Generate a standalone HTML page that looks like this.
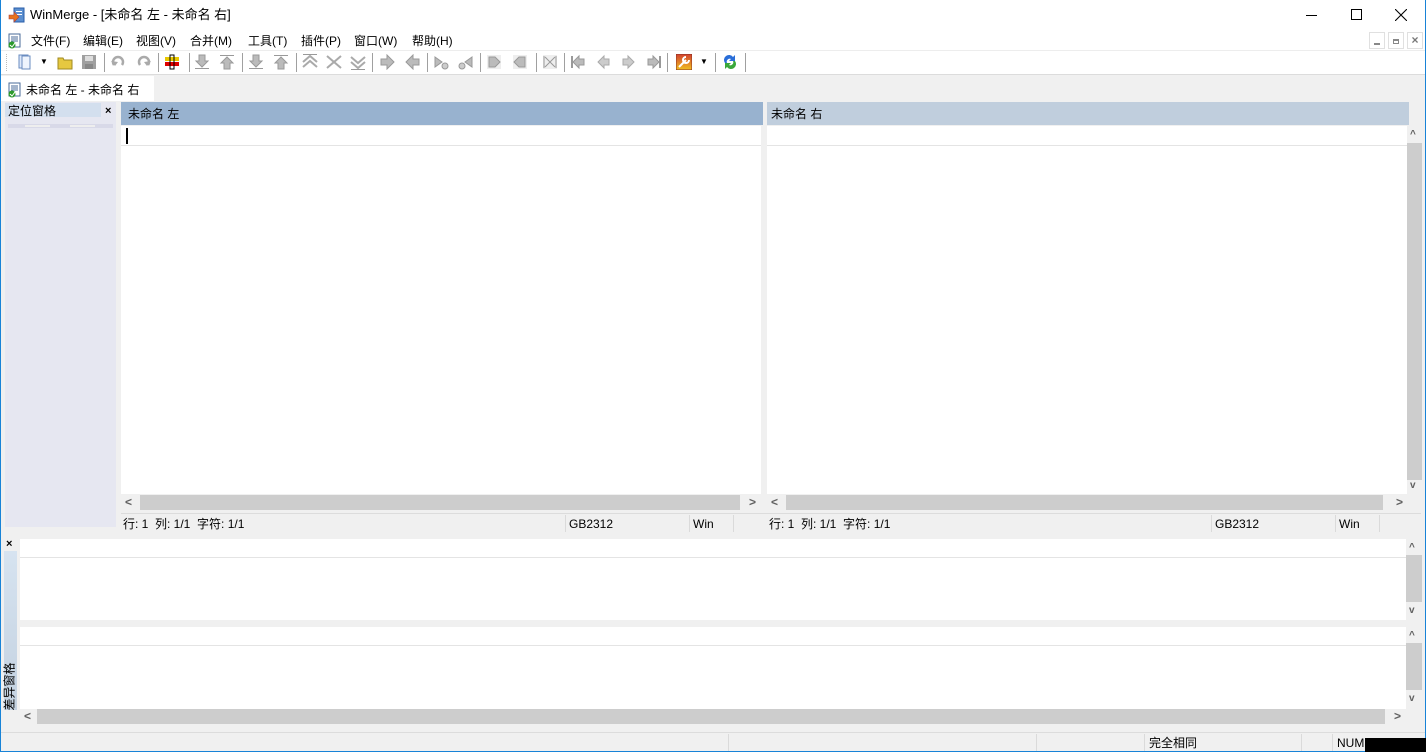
<!DOCTYPE html>
<html><head><meta charset="utf-8"><style>
*{margin:0;padding:0;box-sizing:border-box}
body{width:1426px;height:752px;position:relative;overflow:hidden;background:#f0f0f0;font-family:"Liberation Sans","Noto Sans CJK SC",sans-serif;font-size:12px;color:#000}
.a{position:absolute}
.t{position:absolute;white-space:nowrap;font-size:12px;line-height:14px}
.sep{position:absolute;top:53px;width:1px;height:19px;background:#a0a0a0}
.ic{position:absolute;top:54px;width:16px;height:16px}
</style></head><body>
<div class="a" style="left:0;top:0;width:1426px;height:752px;border:1px solid #1883d7;border-top:none"></div>
<div class="a" style="left:1px;top:0;width:1424px;height:50px;background:#fff"></div>
<svg class="a" style="left:8px;top:7px" width="18" height="18"><rect x="6" y="1" width="10" height="14" fill="#5b8fd0" stroke="#2a5da8"/><rect x="8" y="4" width="6" height="1" fill="#fff"/><rect x="8" y="7" width="6" height="1" fill="#fff"/><path d="M1 8h5v-3l5 5-5 5v-3H1z" fill="#e8731c" stroke="#a44" stroke-width=".6"/></svg>
<div class="t" style="left:30px;top:8px;font-size:13px">WinMerge - [未命名 左 - 未命名 右]</div>
<div class="a" style="left:1306px;top:15px;width:11px;height:1px;background:#000"></div>
<div class="a" style="left:1351px;top:9px;width:11px;height:11px;border:1px solid #000"></div>
<svg class="a" style="left:1395px;top:9px" width="12" height="12"><path d="M0 0L12 12M12 0L0 12" stroke="#000" stroke-width="1.1"/></svg>
<svg class="a" style="left:7px;top:33px" width="16" height="16"><rect x="2" y="1" width="11" height="13" fill="#fff" stroke="#4a6b9a"/><path d="M4 4h7M4 6h7M4 8h7" stroke="#4a6b9a"/><circle cx="5" cy="12" r="3.5" fill="#2b9a2b"/><path d="M3 12l2 2 3-4" stroke="#fff" fill="none"/></svg>
<div class="t" style="left:31px;top:34px">文件(F)</div>
<div class="t" style="left:83px;top:34px">编辑(E)</div>
<div class="t" style="left:136px;top:34px">视图(V)</div>
<div class="t" style="left:190px;top:34px">合并(M)</div>
<div class="t" style="left:248px;top:34px">工具(T)</div>
<div class="t" style="left:301px;top:34px">插件(P)</div>
<div class="t" style="left:354px;top:34px">窗口(W)</div>
<div class="t" style="left:412px;top:34px">帮助(H)</div>
<div class="a" style="left:1369px;top:32px;width:16px;height:17px;border:1px solid #e0e0e0"></div>
<div class="a" style="left:1374px;top:43px;width:6px;height:2px;background:#888"></div>
<div class="a" style="left:1388px;top:32px;width:16px;height:17px;border:1px solid #e0e0e0"></div>
<div class="a" style="left:1393px;top:39px;width:6px;height:5px;border:1px solid #888;border-top-width:2px"></div>
<div class="a" style="left:1407px;top:32px;width:16px;height:17px;border:1px solid #e0e0e0;color:#777;font-size:12px;font-weight:bold;text-align:center;line-height:15px">×</div>
<div class="a" style="left:1px;top:50px;width:1424px;height:25px;background:#fff;border-top:1px solid #ededed;border-bottom:1px solid #dcdcdc"></div>
<div class="a" style="left:6px;top:54px;width:1px;height:17px;border-left:1px dotted #bbb"></div>
<svg class="ic" style="left:17px"><rect x="2" y="1" width="9" height="13" fill="#dde9fa" stroke="#6a8cc0"/><rect x="5" y="2" width="8" height="13" fill="#eef4fd" stroke="#6a8cc0"/></svg>
<div class="t" style="left:40px;top:55px;font-size:8px">▼</div>
<svg class="ic" style="left:57px"><path d="M1 4h5l1 2h8v9H1z" fill="#e6c840" stroke="#a08a20"/></svg>
<svg class="ic" style="left:81px"><rect x="1" y="1" width="14" height="14" fill="#a0a0a0"/><rect x="4" y="2" width="8" height="5" fill="#ddd"/><rect x="4" y="10" width="8" height="5" fill="#888"/></svg>
<div class="sep" style="left:104px"></div>
<svg class="ic" style="left:110px"><path d="M4 11a5 5 0 1 1 8 0" stroke="#aaa" stroke-width="2.5" fill="none"/><path d="M1 7l4 5 3-4z" fill="#aaa"/></svg>
<svg class="ic" style="left:136px"><path d="M12 11a5 5 0 1 0-8 0" stroke="#aaa" stroke-width="2.5" fill="none"/><path d="M15 7l-4 5-3-4z" fill="#aaa"/></svg>
<div class="sep" style="left:158px"></div>
<svg class="ic" style="left:164px"><rect x="1" y="3" width="14" height="4" fill="#e8c800"/><rect x="1" y="8" width="14" height="4" fill="#d00"/><rect x="6" y="1" width="4" height="14" fill="none" stroke="#000"/></svg>
<div class="sep" style="left:189px"></div>
<svg class="ic" style="left:194px"><path d="M5 1h6v6h3l-6 6-6-6h3z" fill="#bbb" stroke="#999"/><rect x="1" y="14" width="14" height="1" fill="#999"/></svg>
<svg class="ic" style="left:219px"><path d="M5 15h6V9h3L8 3 2 9h3z" fill="#bbb" stroke="#999"/><rect x="1" y="1" width="14" height="1" fill="#999"/></svg>
<div class="sep" style="left:242px"></div>
<svg class="ic" style="left:248px"><path d="M5 1h6v6h3l-6 6-6-6h3z" fill="#bbb" stroke="#999"/><rect x="1" y="14" width="14" height="1" fill="#999"/></svg>
<svg class="ic" style="left:273px"><path d="M5 15h6V9h3L8 3 2 9h3z" fill="#bbb" stroke="#999"/><rect x="1" y="1" width="14" height="1" fill="#999"/></svg>
<div class="sep" style="left:296px"></div>
<svg class="ic" style="left:302px"><path d="M1 8L8 2l7 6M1 13l7-6 7 6" stroke="#aaa" stroke-width="2" fill="none"/><rect x="1" y="0" width="14" height="1" fill="#999"/></svg>
<svg class="ic" style="left:326px"><path d="M1 2l7 6 7-6M1 14l7-6 7 6" stroke="#aaa" stroke-width="2" fill="none"/></svg>
<svg class="ic" style="left:350px"><path d="M1 3l7 6 7-6M1 8l7 6 7-6" stroke="#aaa" stroke-width="2" fill="none"/><rect x="1" y="15" width="14" height="1" fill="#999"/></svg>
<div class="sep" style="left:372px"></div>
<svg class="ic" style="left:379px"><path d="M2 5h6V1l7 7-7 7v-4H2z" fill="#bbb" stroke="#999"/></svg>
<svg class="ic" style="left:405px"><path d="M14 5H8V1L1 8l7 7v-4h6z" fill="#bbb" stroke="#999"/></svg>
<div class="sep" style="left:427px"></div>
<svg class="ic" style="left:433px"><path d="M2 3l7 5-7 5z" fill="#bbb" stroke="#999"/><circle cx="12" cy="12" r="3" fill="#ccc" stroke="#999"/></svg>
<svg class="ic" style="left:458px"><path d="M14 3L7 8l7 5z" fill="#bbb" stroke="#999"/><circle cx="4" cy="12" r="3" fill="#ccc" stroke="#999"/></svg>
<div class="sep" style="left:480px"></div>
<svg class="ic" style="left:486px"><rect x="1" y="1" width="14" height="14" fill="#eee"/><path d="M3 3h6l5 5-5 5H3z" fill="#bbb" stroke="#999"/></svg>
<svg class="ic" style="left:512px"><rect x="1" y="1" width="14" height="14" fill="#eee"/><path d="M13 3H7L2 8l5 5h6z" fill="#bbb" stroke="#999"/></svg>
<div class="sep" style="left:536px"></div>
<svg class="ic" style="left:542px"><rect x="1" y="1" width="14" height="14" fill="#eee"/><path d="M2 2v12M14 2v12M3 3l5 5-5 5M13 3L8 8l5 5" stroke="#999" fill="none"/></svg>
<div class="sep" style="left:564px"></div>
<svg class="ic" style="left:570px"><rect x="1" y="2" width="2" height="12" fill="#999"/><path d="M14 5H9V2L3 8l6 6v-3h5z" fill="#bbb" stroke="#999"/></svg>
<svg class="ic" style="left:595px"><path d="M14 5H9V2L3 8l6 6v-3h5z" fill="#ccc" stroke="#aaa"/></svg>
<svg class="ic" style="left:621px"><path d="M2 5h5V2l6 6-6 6v-3H2z" fill="#ccc" stroke="#aaa"/></svg>
<svg class="ic" style="left:646px"><rect x="13" y="2" width="2" height="12" fill="#999"/><path d="M2 5h5V2l6 6-6 6v-3H2z" fill="#bbb" stroke="#999"/></svg>
<div class="sep" style="left:667px"></div>
<svg class="ic" style="left:676px"><defs><linearGradient id="g" x1="0" y1="0" x2="0" y2="1"><stop offset="0" stop-color="#d24030"/><stop offset="1" stop-color="#f0c020"/></linearGradient></defs><rect x="0" y="0" width="16" height="16" fill="url(#g)" stroke="#8a3020"/><path d="M3 13l7-7M10 3a3 3 0 1 0 3 3" stroke="#fff" stroke-width="2" fill="none"/></svg>
<div class="t" style="left:700px;top:55px;font-size:8px">▼</div>
<div class="sep" style="left:715px"></div>
<svg class="ic" style="left:722px"><path d="M3 9a5 5 0 0 1 8-6l2-2v6H7l2-2a3 3 0 0 0-4 4z" fill="#2a6ed8"/><path d="M13 7a5 5 0 0 1-8 6l-2 2V9h6l-2 2a3 3 0 0 0 4-4z" fill="#3aa83a"/></svg>
<div class="sep" style="left:745px"></div>
<div class="a" style="left:1px;top:76px;width:153px;height:25px;background:#fff"></div>
<svg class="a" style="left:7px;top:82px" width="16" height="16"><rect x="2" y="1" width="11" height="13" fill="#fff" stroke="#4a6b9a"/><path d="M4 4h7M4 6h7M4 8h7" stroke="#4a6b9a"/><circle cx="5" cy="12" r="3.5" fill="#2b9a2b"/><path d="M3 12l2 2 3-4" stroke="#fff" fill="none"/></svg>
<div class="t" style="left:26px;top:83px;font-size:12px">未命名 左 - 未命名 右</div>
<div class="a" style="left:5px;top:102px;width:111px;height:425px;background:#e6e7f1"></div>
<div class="a" style="left:5px;top:103px;width:96px;height:14px;background:#d3dfee"></div>
<div class="t" style="left:8px;top:104px">定位窗格</div>
<div class="t" style="left:105px;top:104px;font-size:11px;font-weight:bold">×</div>
<div class="a" style="left:8px;top:124px;width:105px;height:4px;background:#d8d9e8"></div>
<div class="a" style="left:25px;top:125px;width:25px;height:2px;background:#eee"></div>
<div class="a" style="left:70px;top:125px;width:25px;height:2px;background:#eee"></div>
<div class="a" style="left:121px;top:102px;width:642px;height:23px;background:#98b2cf"></div>
<div class="t" style="left:128px;top:107px">未命名 左</div>
<div class="a" style="left:121px;top:126px;width:640px;height:368px;background:#fff"></div>
<div class="a" style="left:121px;top:145px;width:640px;height:1px;background:#e4e4e4"></div>
<div class="a" style="left:126px;top:128px;width:2px;height:16px;background:#000"></div>
<div class="a" style="left:121px;top:494px;width:640px;height:17px;background:#f0f0f0"></div>
<div class="a" style="left:140px;top:495px;width:600px;height:15px;background:#cdcdcd"></div>
<div class="t" style="left:125px;top:495px;color:#606060;font-weight:bold">&lt;</div>
<div class="t" style="left:749px;top:495px;color:#606060;font-weight:bold">&gt;</div>
<div class="a" style="left:767px;top:102px;width:642px;height:23px;background:#c0cedd"></div>
<div class="t" style="left:771px;top:107px">未命名 右</div>
<div class="a" style="left:767px;top:126px;width:640px;height:368px;background:#fff"></div>
<div class="a" style="left:767px;top:145px;width:640px;height:1px;background:#e4e4e4"></div>
<div class="a" style="left:1407px;top:143px;width:15px;height:337px;background:#cdcdcd"></div>
<div class="t" style="left:1410px;top:128px;color:#606060;font-size:10px;font-weight:bold">^</div>
<div class="t" style="left:1410px;top:479px;color:#606060;font-size:10px;font-weight:bold">v</div>
<div class="a" style="left:767px;top:494px;width:640px;height:17px;background:#f0f0f0"></div>
<div class="a" style="left:786px;top:495px;width:597px;height:15px;background:#cdcdcd"></div>
<div class="t" style="left:771px;top:495px;color:#606060;font-weight:bold">&lt;</div>
<div class="t" style="left:1396px;top:495px;color:#606060;font-weight:bold">&gt;</div>
<div class="a" style="left:121px;top:513px;width:1300px;height:1px;background:#dcdcdc"></div>
<div class="t" style="left:123px;top:517px">行: 1&nbsp;&nbsp;列: 1/1&nbsp;&nbsp;字符: 1/1</div>
<div class="a" style="left:565px;top:515px;width:1px;height:17px;background:#dadada"></div>
<div class="t" style="left:569px;top:517px">GB2312</div>
<div class="a" style="left:689px;top:515px;width:1px;height:17px;background:#dadada"></div>
<div class="t" style="left:693px;top:517px">Win</div>
<div class="a" style="left:733px;top:515px;width:1px;height:17px;background:#dadada"></div>
<div class="t" style="left:769px;top:517px">行: 1&nbsp;&nbsp;列: 1/1&nbsp;&nbsp;字符: 1/1</div>
<div class="a" style="left:1211px;top:515px;width:1px;height:17px;background:#dadada"></div>
<div class="t" style="left:1215px;top:517px">GB2312</div>
<div class="a" style="left:1335px;top:515px;width:1px;height:17px;background:#dadada"></div>
<div class="t" style="left:1339px;top:517px">Win</div>
<div class="a" style="left:1379px;top:515px;width:1px;height:17px;background:#dadada"></div>
<div class="t" style="left:6px;top:537px;font-size:11px;font-weight:bold">×</div>
<div class="a" style="left:4px;top:551px;width:13px;height:159px;background:linear-gradient(#d6e3f0,#c3d1e0)"></div>
<div class="t" style="left:-18px;top:676px;width:56px;height:13px;line-height:13px;font-size:12px;transform:rotate(-90deg);text-align:left">差异窗格</div>
<div class="a" style="left:20px;top:539px;width:1386px;height:81px;background:#fff"></div>
<div class="a" style="left:20px;top:557px;width:1386px;height:1px;background:#e4e4e4"></div>
<div class="a" style="left:1406px;top:555px;width:16px;height:47px;background:#cdcdcd"></div>
<div class="t" style="left:1409px;top:541px;color:#606060;font-size:10px;font-weight:bold">^</div>
<div class="t" style="left:1409px;top:604px;color:#606060;font-size:10px;font-weight:bold">v</div>
<div class="a" style="left:20px;top:627px;width:1386px;height:82px;background:#fff"></div>
<div class="a" style="left:20px;top:645px;width:1386px;height:1px;background:#e4e4e4"></div>
<div class="a" style="left:1406px;top:643px;width:16px;height:47px;background:#cdcdcd"></div>
<div class="t" style="left:1409px;top:629px;color:#606060;font-size:10px;font-weight:bold">^</div>
<div class="t" style="left:1409px;top:692px;color:#606060;font-size:10px;font-weight:bold">v</div>
<div class="a" style="left:37px;top:709px;width:1348px;height:15px;background:#cdcdcd"></div>
<div class="t" style="left:24px;top:709px;color:#606060;font-weight:bold">&lt;</div>
<div class="t" style="left:1394px;top:709px;color:#606060;font-weight:bold">&gt;</div>
<div class="a" style="left:1px;top:732px;width:1424px;height:1px;background:#dcdcdc"></div>
<div class="a" style="left:728px;top:734px;width:1px;height:17px;background:#dadada"></div>
<div class="a" style="left:1036px;top:734px;width:1px;height:17px;background:#dadada"></div>
<div class="a" style="left:1144px;top:734px;width:1px;height:17px;background:#dadada"></div>
<div class="t" style="left:1149px;top:736px">完全相同</div>
<div class="a" style="left:1301px;top:734px;width:1px;height:17px;background:#dadada"></div>
<div class="a" style="left:1332px;top:734px;width:1px;height:17px;background:#dadada"></div>
<div class="t" style="left:1337px;top:736px">NUM</div>
<div class="a" style="left:1365px;top:738px;width:61px;height:14px;background:#000"></div>
</body></html>
